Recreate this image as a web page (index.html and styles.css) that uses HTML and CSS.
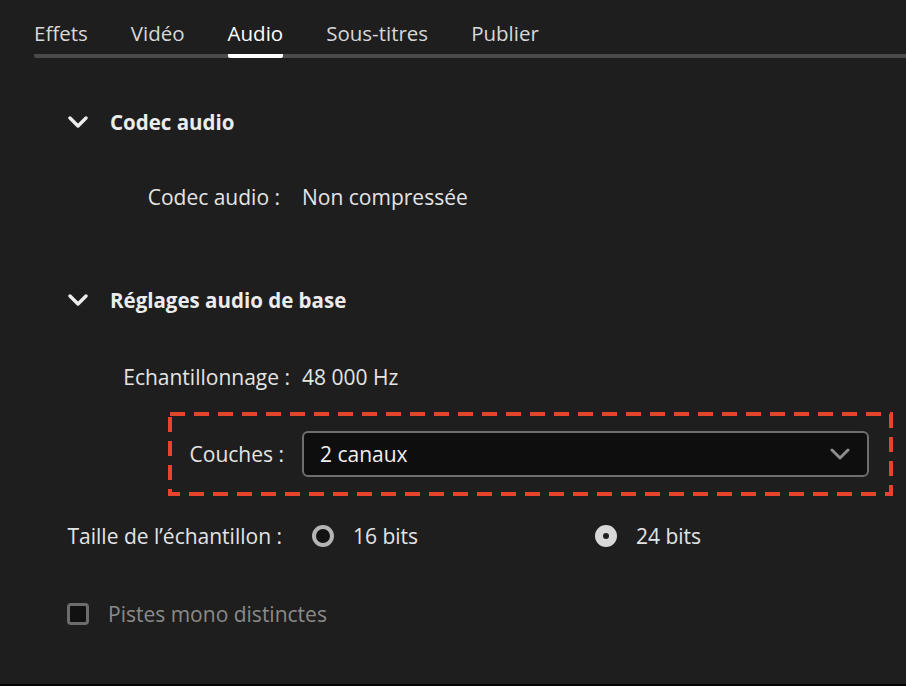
FILE: index.html
```html
<!DOCTYPE html>
<html>
<head>
    <title>Audio</title>
    <link rel="stylesheet" href="styles.css">
</head>
<body>
    <div class="page">
        <nav class="tabs">
            <span class="tab">Effets</span>
            <span class="tab">Vidéo</span>
            <span class="tab active">Audio</span>
            <span class="tab">Sous-titres</span>
            <span class="tab">Publier</span>
        </nav>

        <div class="section-head first">
            <svg class="chevron" width="20" height="12" viewBox="0 0 20 12"><polyline points="2,2 10,10 18,2" /></svg>
            <span>Codec audio</span>
        </div>
        <div class="field codec">
            <span class="label">Codec audio :</span>
            <span class="value">Non compressée</span>
        </div>

        <div class="section-head second">
            <svg class="chevron" width="20" height="12" viewBox="0 0 20 12"><polyline points="2,2 10,10 18,2" /></svg>
            <span>Réglages audio de base</span>
        </div>
        <div class="field sample-rate">
            <span class="label">Echantillonnage :</span>
            <span class="value">48 000 Hz</span>
        </div>

        <div class="highlight">
            <!-- cadre pointillé -->
            <svg class="dash-frame"><rect width="100%" height="100%" /></svg>
            <span class="label">Couches :</span>
            <div class="select">
                <span>2 canaux</span>
                <svg class="select-arrow" width="20" height="12" viewBox="0 0 20 12"><polyline points="2,2 10,10 18,2" /></svg>
            </div>
        </div>

        <div class="field sample-size">
            <span class="label">Taille de l’échantillon :</span>
            <div class="options">
                <label class="option"><span class="radio"></span>16 bits</label>
                <label class="option"><span class="radio checked"></span>24 bits</label>
            </div>
        </div>

        <label class="check-row">
            <span class="checkbox"></span>
            Pistes mono distinctes
        </label>
    </div>
</body>
</html>
```

FILE: styles.css
```css
html {
    background-color: #000000;
}

body {
    margin: 0;
    font-family: "Open Sans", "Liberation Sans", sans-serif;
    font-size: 21px;
    line-height: 24px;
    color: #e4e4e4;
}

.page {
    height: 686px;
    box-sizing: border-box;
    background-color: #1e1e1e;
    border-bottom: 2px solid #000000;
    padding-top: 21px;
    overflow: hidden;
}

/* onglets */
.tabs {
    display: flex;
    gap: 43px;
    margin-left: 34px;
    border-bottom: 4px solid #4b4b4b;
    border-radius: 2px 0 0 2px;
    font-size: 20.5px;
}

.tab {
    color: #d8d8d8;
    padding-bottom: 9px;
    margin-bottom: -4px;
    border-bottom: 4px solid transparent;
    border-radius: 2px;
}

.tab.active {
    color: #ffffff;
    border-bottom-color: #ffffff;
}

/* sections */
.section-head {
    display: flex;
    align-items: center;
    gap: 22px;
    padding-left: 68px;
    font-weight: 700;
    font-size: 20.5px;
    color: #ececec;
}

.section-head.first {
    margin-top: 52px;
}

.section-head.second {
    margin-top: 79px;
}

.chevron polyline,
.select-arrow polyline {
    fill: none;
    stroke-width: 3;
    stroke-linecap: round;
    stroke-linejoin: round;
}

.chevron polyline {
    stroke: #eeeeee;
    stroke-width: 3.4;
}

.select-arrow polyline {
    stroke: #8c8c8c;
}

.field {
    display: flex;
    align-items: center;
}

.field .label {
    width: 290px;
    text-align: right;
    flex-shrink: 0;
}

.field .value {
    margin-left: 12px;
}

.codec {
    margin-top: 51px;
}

.codec .label {
    width: 280px;
}

.codec .value {
    margin-left: 22px;
}

.sample-rate {
    margin-top: 53px;
}

/* bloc entouré */
.highlight {
    position: relative;
    display: flex;
    align-items: center;
    margin: 23px 13px 0 168px;
    padding: 19px 24px 19px 20px;
}

.dash-frame {
    position: absolute;
    top: 2px;
    left: 2px;
    width: calc(100% - 4px);
    height: calc(100% - 4px);
    overflow: visible;
}

.dash-frame rect {
    fill: none;
    stroke: #e8442c;
    stroke-width: 4;
    stroke-dasharray: 15 9;
}

.highlight .label {
    width: 96px;
    text-align: right;
    margin-right: 18px;
}

.select {
    flex: 1;
    height: 46px;
    box-sizing: border-box;
    display: flex;
    align-items: center;
    justify-content: space-between;
    padding: 0 17px 0 16px;
    background-color: #0e0e0e;
    border: 2px solid #6e6e6e;
    border-radius: 6px;
    color: #f0f0f0;
}

.sample-size {
    margin-top: 28px;
}

.sample-size .label {
    width: 282px;
}

.options {
    display: flex;
    margin-left: 30px;
}

.option {
    display: flex;
    align-items: center;
    gap: 19px;
    width: 283px;
}

.radio {
    width: 22px;
    height: 22px;
    box-sizing: border-box;
    border-radius: 50%;
    border: 4px solid #b4b4b4;
    background-color: #121212;
}

.radio.checked {
    border: 8px solid #d8d8d8;
    background-color: #1e1e1e;
}

.check-row {
    display: flex;
    align-items: center;
    gap: 19px;
    margin-top: 54px;
    padding-left: 67px;
    color: #8a8a8a;
}

.checkbox {
    width: 22px;
    height: 22px;
    box-sizing: border-box;
    border: 3px solid #6c6c6c;
    border-radius: 4px;
    background-color: #111111;
}
```
